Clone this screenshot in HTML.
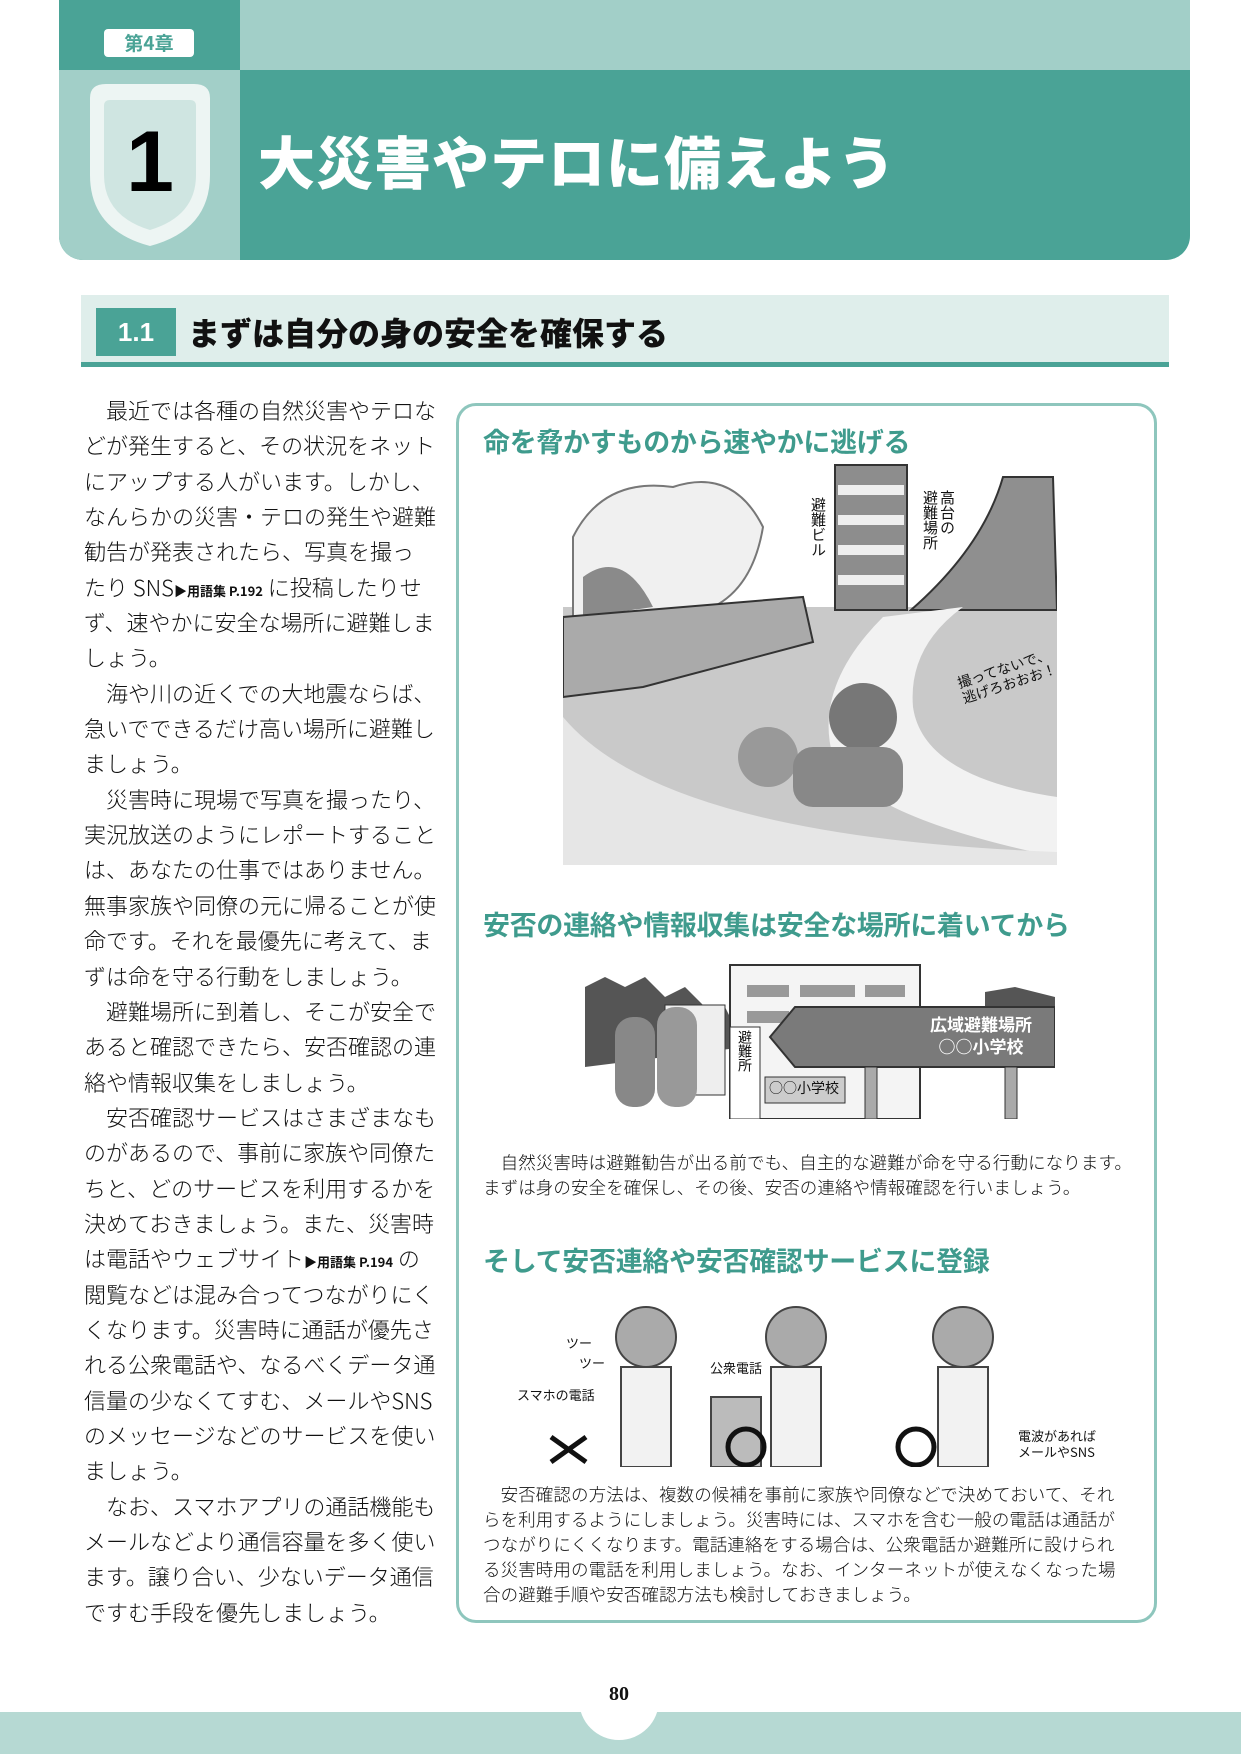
<!DOCTYPE html>
<html><head><meta charset="utf-8"><style>
*{margin:0;padding:0;box-sizing:border-box}
body{width:1241px;height:1754px;position:relative;background:#fff;font-family:"Liberation Sans","Noto Sans CJK JP",sans-serif;overflow:hidden;color:#111}
.a{position:absolute}
.jp{font-family:"Noto Sans CJK JP",sans-serif}
.lt{left:84px;top:393px;font-size:22px;line-height:35.35px;white-space:nowrap;font-weight:300}
.sm{font-size:13px;font-weight:bold;line-height:0;display:inline-block;vertical-align:baseline}
.h{color:#3f9b8d;font-weight:bold;font-size:27px;letter-spacing:-0.3px;white-space:nowrap}
.cap{font-size:17.5px;line-height:24.6px;white-space:nowrap;letter-spacing:0.1px;font-weight:300}
</style></head><body>
<div class="a" style="left:59px;top:0;width:1131px;height:260px;border-radius:0 0 24px 24px;overflow:hidden;background:#4aa396">
  <div class="a" style="left:181px;top:0;width:950px;height:70px;background:#a2cfc8"></div>
  <div class="a" style="left:0;top:70px;width:181px;height:190px;background:#a2cfc8"></div>
</div>
<div class="a jp" style="left:104px;top:29px;width:90px;height:28px;background:#fff;border-radius:4px;color:#4aa396;font-weight:bold;font-size:19px;text-align:center;line-height:28px">第4章</div>
<svg class="a" style="left:80px;top:80px" width="140" height="170" viewBox="0 0 140 170">
<path d="M10 18 Q10 4 26 4 H114 Q130 4 130 18 V95 Q130 150 70 166 Q10 150 10 95 Z" fill="#edf5f3"/>
<path d="M24 26 Q24 20 30 20 H110 Q116 20 116 26 V95 Q116 136 70 150 Q24 136 24 95 Z" fill="#cfe5e1"/>
</svg>
<div class="a" style="left:110px;top:112px;width:80px;text-align:center;font-size:86px;font-weight:bold;line-height:100px;color:#000">1</div>
<div class="a jp" style="left:258px;top:125px;font-size:57px;font-weight:900;color:#fff;line-height:70px;letter-spacing:1px">大災害やテロに備えよう</div>
<div class="a" style="left:81px;top:295px;width:1088px;height:67px;background:#dfeeeb"></div>
<div class="a" style="left:81px;top:362px;width:1088px;height:5px;background:#4aa396"></div>
<div class="a" style="left:96px;top:308px;width:80px;height:48px;background:#4aa396;color:#fff;font-weight:bold;font-size:26px;text-align:center;line-height:48px">1.1</div>
<div class="a jp" style="left:188px;top:310px;font-size:32px;font-weight:900;line-height:44px;color:#111">まずは自分の身の安全を確保する</div>
<div class="a lt jp">
　最近では各種の自然災害やテロな<br>
どが発生すると、その状況をネット<br>
にアップする人がいます。しかし、<br>
なんらかの災害・テロの発生や避難<br>
勧告が発表されたら、写真を撮っ<br>
たり SNS<span class="sm">▶用語集 P.192</span> に投稿したりせ<br>
ず、速やかに安全な場所に避難しま<br>
しょう。<br>
　海や川の近くでの大地震ならば、<br>
急いでできるだけ高い場所に避難し<br>
ましょう。<br>
　災害時に現場で写真を撮ったり、<br>
実況放送のようにレポートすること<br>
は、あなたの仕事ではありません。<br>
無事家族や同僚の元に帰ることが使<br>
命です。それを最優先に考えて、ま<br>
ずは命を守る行動をしましょう。<br>
　避難場所に到着し、そこが安全で<br>
あると確認できたら、安否確認の連<br>
絡や情報収集をしましょう。<br>
　安否確認サービスはさまざまなも<br>
のがあるので、事前に家族や同僚た<br>
ちと、どのサービスを利用するかを<br>
決めておきましょう。また、災害時<br>
は電話やウェブサイト<span class="sm">▶用語集 P.194</span> の<br>
閲覧などは混み合ってつながりにく<br>
くなります。災害時に通話が優先さ<br>
れる公衆電話や、なるべくデータ通<br>
信量の少なくてすむ、メールやSNS<br>
のメッセージなどのサービスを使い<br>
ましょう。<br>
　なお、スマホアプリの通話機能も<br>
メールなどより通信容量を多く使い<br>
ます。譲り合い、少ないデータ通信<br>
ですむ手段を優先しましょう。
</div>
<div class="a" style="left:456px;top:403px;width:701px;height:1220px;border:3px solid #8ec6bd;border-radius:20px"></div>
<div class="a h jp" style="left:483px;top:421px">命を脅かすものから速やかに逃げる</div>
<svg class="a" style="left:563px;top:457px" width="494" height="410">
<rect x="0" y="150" width="494" height="258" fill="#c9c9c9"/>
<path d="M10 80 Q40 20 110 30 Q170 10 200 70 Q190 130 150 150 L10 160 Z" fill="#f0f0f0" stroke="#777" stroke-width="2"/>
<path d="M20 120 Q60 90 90 150 L20 160Z" fill="#8a8a8a"/>
<rect x="272" y="8" width="72" height="145" fill="#8d8d8d" stroke="#333" stroke-width="2"/>
<g fill="#eee"><rect x="275" y="28" width="66" height="10"/><rect x="275" y="58" width="66" height="10"/><rect x="275" y="88" width="66" height="10"/><rect x="275" y="118" width="66" height="10"/></g>
<path d="M348 153 Q420 90 440 20 L490 20 L494 153Z" fill="#8f8f8f" stroke="#333" stroke-width="2"/>
<path d="M0 160 L240 140 L250 185 L80 230 L0 240Z" fill="#aaa" stroke="#333" stroke-width="2"/>
<path d="M320 160 Q250 230 270 300 Q300 360 494 400 L494 340 Q360 320 350 250 Q345 190 400 150Z" fill="#f2f2f2"/>
<path d="M0 260 Q100 380 494 395 L494 408 L0 408Z" fill="#e6e6e6"/>
<circle cx="300" cy="260" r="34" fill="#777"/><circle cx="205" cy="300" r="30" fill="#999"/>
<rect x="230" y="290" width="110" height="60" rx="20" fill="#888"/>
</svg>
<div class="a jp" style="left:810px;top:497px;writing-mode:vertical-rl;font-size:15px;line-height:17px">避難ビル</div>
<div class="a jp" style="left:922px;top:490px;writing-mode:vertical-rl;font-size:15px;line-height:17px">高台の<br>避難場所</div>
<div class="a jp" style="left:958px;top:660px;font-size:14px;line-height:16px;transform:rotate(-18deg)">撮ってないで、<br>逃げろおおお！</div>
<div class="a h jp" style="left:483px;top:904px">安否の連絡や情報収集は安全な場所に着いてから</div>
<svg class="a" style="left:585px;top:947px" width="470" height="172">
<path d="M0 40 L20 30 L40 40 L60 30 L80 50 L100 40 L120 60 L140 60 L160 100 L0 120Z" fill="#555"/>
<path d="M400 45 L430 40 L470 50 L470 100 L400 100Z" fill="#555"/>
<rect x="80" y="58" width="60" height="90" fill="#eee" stroke="#333"/>
<rect x="145" y="18" width="190" height="154" fill="#f4f4f4" stroke="#333" stroke-width="2"/>
<g fill="#999"><rect x="162" y="38" width="42" height="12"/><rect x="215" y="38" width="55" height="12"/><rect x="280" y="38" width="40" height="12"/><rect x="162" y="64" width="42" height="12"/><rect x="215" y="64" width="55" height="12"/><rect x="280" y="64" width="40" height="12"/></g>
<rect x="30" y="70" width="40" height="90" rx="18" fill="#888"/><rect x="72" y="60" width="40" height="100" rx="18" fill="#999"/>
<path d="M185 90 L210 60 L470 60 L470 120 L210 120Z" fill="#7a7a7a" stroke="#333" stroke-width="2"/>
<rect x="280" y="120" width="12" height="52" fill="#aaa" stroke="#333"/><rect x="420" y="120" width="12" height="52" fill="#aaa" stroke="#333"/>
<rect x="145" y="80" width="30" height="92" fill="#fff" stroke="#333"/>
<rect x="180" y="130" width="80" height="26" fill="#ccc" stroke="#333"/>
</svg>
<div class="a jp" style="left:930px;top:1013px;color:#fff;font-weight:bold;font-size:17px;line-height:22px;text-align:center">広域避難場所<br>○○小学校</div>
<div class="a jp" style="left:735px;top:1030px;writing-mode:vertical-rl;font-size:14px">避難所</div>
<div class="a jp" style="left:769px;top:1078px;font-size:14px">○○小学校</div>
<div class="a cap jp" style="left:483px;top:1151px">　自然災害時は避難勧告が出る前でも、自主的な避難が命を守る行動になります。<br>まずは身の安全を確保し、その後、安否の連絡や情報確認を行いましょう。</div>
<div class="a h jp" style="left:483px;top:1240px">そして安否連絡や安否確認サービスに登録</div>
<svg class="a" style="left:526px;top:1287px" width="615" height="180">
<g fill="#aaa" stroke="#444" stroke-width="2">
<circle cx="120" cy="50" r="30"/><rect x="95" y="80" width="50" height="100" fill="#f2f2f2"/>
<circle cx="270" cy="50" r="30"/><rect x="245" y="80" width="50" height="100" fill="#f2f2f2"/>
<rect x="185" y="110" width="50" height="70" fill="#bbb"/>
<circle cx="437" cy="50" r="30"/><rect x="412" y="80" width="50" height="100" fill="#f2f2f2"/>
</g>
<path d="M25 150 L60 175 M60 150 L25 175" stroke="#111" stroke-width="5"/>
<circle cx="220" cy="160" r="18" fill="none" stroke="#111" stroke-width="5"/>
<circle cx="390" cy="160" r="18" fill="none" stroke="#111" stroke-width="5"/>
</svg>
<div class="a jp" style="left:566px;top:1333px;font-size:13px;line-height:20px">ツー<br>　ツー</div>
<div class="a jp" style="left:517px;top:1385px;font-size:13px">スマホの電話</div>
<div class="a jp" style="left:710px;top:1358px;font-size:13px">公衆電話</div>
<div class="a jp" style="left:1018px;top:1428px;font-size:13px;line-height:16px">電波があれば<br>メールやSNS</div>
<div class="a cap jp" style="left:483px;top:1482px;line-height:25px">　安否確認の方法は、複数の候補を事前に家族や同僚などで決めておいて、それ<br>らを利用するようにしましょう。災害時には、スマホを含む一般の電話は通話が<br>つながりにくくなります。電話連絡をする場合は、公衆電話か避難所に設けられ<br>る災害時用の電話を利用しましょう。なお、インターネットが使えなくなった場<br>合の避難手順や安否確認方法も検討しておきましょう。</div>
<div class="a" style="left:0;top:1712px;width:1241px;height:42px;background:#b6d9d3"></div>
<div class="a" style="left:579px;top:1660px;width:80px;height:80px;border-radius:50%;background:#fff"></div>
<div class="a" style="left:579px;top:1683px;width:80px;text-align:center;font-family:'Liberation Serif',serif;font-weight:bold;font-size:20px">80</div>
</body></html>
